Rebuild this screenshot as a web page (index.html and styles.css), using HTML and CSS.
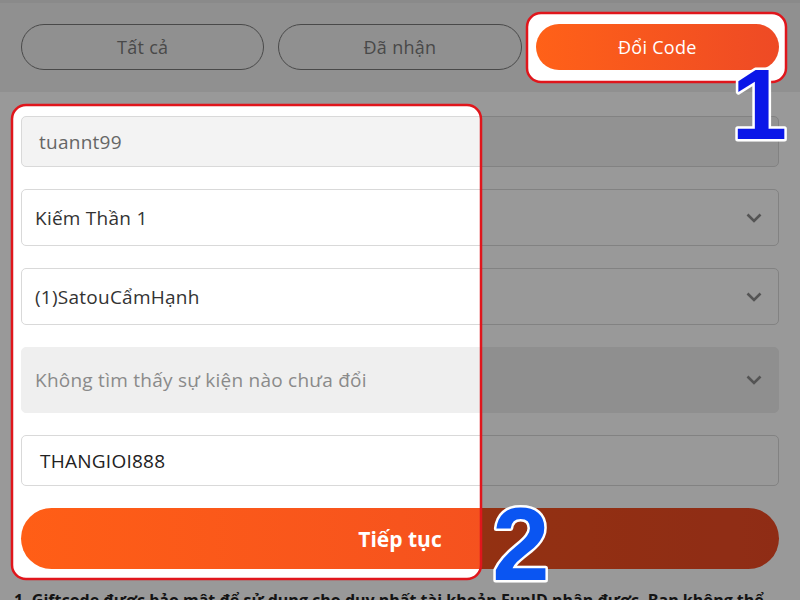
FILE: index.html
```html
<!DOCTYPE html>
<html lang="vi">
<head>
<meta charset="utf-8">
<link rel="stylesheet" href="styles.css">
</head>
<body>
<div class="page">
  <div class="tabs">
    <div class="tab">Tất cả</div>
    <div class="tab">Đã nhận</div>
    <div class="tab active">Đổi Code</div>
  </div>
  <div class="form">
    <div class="field disabled"><span class="val muted">tuannt99</span></div>
    <div class="field select"><span class="val">Kiếm Thần 1</span><svg class="chev" viewBox="0 0 16 10"><path d="M1.5 1.5 L8 8 L14.5 1.5"/></svg></div>
    <div class="field select"><span class="val">(1)SatouCẩmHạnh</span><svg class="chev" viewBox="0 0 16 10"><path d="M1.5 1.5 L8 8 L14.5 1.5"/></svg></div>
    <div class="field select empty"><span class="val placeholder">Không tìm thấy sự kiện nào chưa đổi</span><svg class="chev" viewBox="0 0 16 10"><path d="M1.5 1.5 L8 8 L14.5 1.5"/></svg></div>
    <div class="field code"><span class="val">THANGIOI888</span></div>
    <div class="submit">Tiếp tục</div>
    <p class="note">1. Giftcode được bảo mật để sử dụng cho duy nhất tài khoản FunID nhận được. Bạn không thể</p>
  </div>
  <svg class="overlay" width="800" height="600" viewBox="0 0 800 600">
    <defs>
      <mask id="holes">
        <rect width="800" height="600" fill="#fff"/>
        <rect x="527" y="13" width="259" height="69" rx="14" fill="#000"/>
        <rect x="12" y="105" width="469" height="474" rx="14" fill="#000"/>
      </mask>
    </defs>
    <rect width="800" height="600" fill="rgba(0,0,0,0.4)" mask="url(#holes)"/>
    <rect x="527" y="13" width="259" height="69" rx="14" fill="none" stroke="#e0161c" stroke-width="2.5"/>
    <rect x="12" y="105" width="469" height="474" rx="14" fill="none" stroke="#e0161c" stroke-width="2.5"/>
    <text class="num one" x="787" y="139" text-anchor="end">1</text>
    <text class="num two" x="521" y="580" text-anchor="middle">2</text>
  </svg>
</div>
</body>
</html>
```

FILE: styles.css
```css
* { box-sizing: border-box; }
html, body { margin: 0; padding: 0; background: #fff; }
body { font-family: "Open Sans", "Noto Sans", sans-serif; }
.page {
  position: relative;
  width: 800px;
  height: 600px;
  overflow: hidden;
  background: #fff;
}
.tabs {
  position: relative;
  z-index: 0;
  display: grid;
  grid-template-columns: repeat(3, 1fr);
  gap: 14px;
  height: 92px;
  padding: 21px 21px 22px;
  background: #f1f1f1;
  border-top: 3px solid #e6e6e6;
}
.tab {
  position: relative;
  display: flex;
  align-items: center;
  justify-content: center;
  height: 46px;
  border: 1px solid #7a7a7a;
  border-radius: 23px;
  color: #7a7a7a;
  font-size: 18px;
  letter-spacing: 0.3px;
}
.tab.active {
  border: none;
  color: #fff;
  background: linear-gradient(90deg, #ff6118, #ee4a25);
}
.tab.active::before {
  content: "";
  position: absolute;
  inset: -11px -7px -12px -8px;
  background: #fff;
  border-radius: 14px;
  z-index: -1;
}
.form {
  display: flex;
  flex-direction: column;
  gap: 22px;
  padding: 24px 21px 0;
}
.field {
  display: flex;
  align-items: center;
  justify-content: space-between;
  height: 57px;
  padding: 0 16px 0 13px;
  border: 1px solid #d9d9d9;
  border-radius: 5px;
  background: #fff;
  color: #333;
  font-size: 19px;
  letter-spacing: 0.25px;
}
.field.disabled {
  height: 51px;
  padding-left: 17px;
  background: #f3f3f3;
}
.field.empty {
  height: 66px;
  border-color: #efefef;
  background: #efefef;
}
.field.code {
  height: 51px;
  padding-left: 18px;
  color: #222;
}
.val.muted { color: #666; }
.val.placeholder { color: #8a8a8a; }
.chev {
  width: 16px;
  height: 10px;
  fill: none;
  stroke: #8c8c8c;
  stroke-width: 2.6;
}
.submit {
  display: flex;
  align-items: center;
  justify-content: center;
  height: 61px;
  border-radius: 31px;
  background: linear-gradient(90deg, #ff5e16, #ef4a24);
  color: #fff;
  font-size: 21px;
  font-weight: 700;
}
.note {
  margin: -2px 0 0 -7px;
  font-size: 16px;
  font-weight: 700;
  color: #222;
  white-space: nowrap;
}
.overlay {
  position: absolute;
  top: 0;
  left: 0;
  z-index: 10;
  pointer-events: none;
}
.num {
  font-family: "Liberation Sans", Arial, sans-serif;
  font-weight: 700;
  font-size: 100px;
  stroke: #fff;
  stroke-width: 5px;
  paint-order: stroke;
  stroke-linejoin: round;
}
.num.one { fill: #0a16e8; }
.num.two { fill: #0a55f2; font-size: 103px; }
```
